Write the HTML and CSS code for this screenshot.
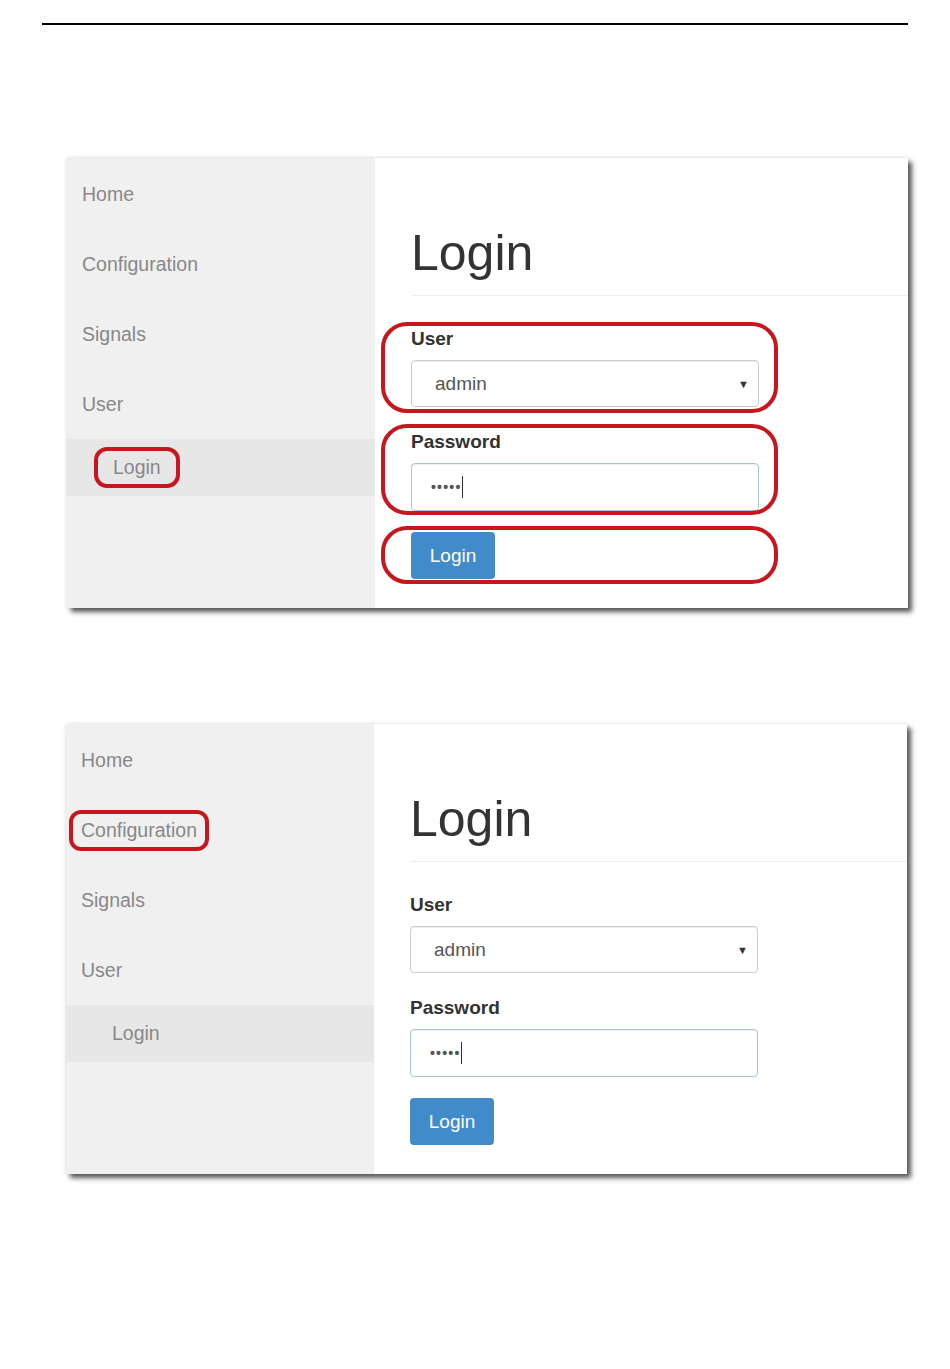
FILE: index.html
```html
<!DOCTYPE html>
<html lang="en">
<head>
    <meta charset="UTF-8">
    <title>Login</title>
    <link rel="stylesheet" href="styles.css">
</head>
<body>
<div class="page">
    <div class="rule"></div>

    <!-- screenshot 1: form fields marked -->
    <div class="panel panel-one">
        <ul class="nav">
            <li>Home</li>
            <li>Configuration</li>
            <li>Signals</li>
            <li>User</li>
            <li class="sub active"><span class="mark mark-login">Login</span></li>
        </ul>
        <div class="main">
            <h1>Login</h1>
            <div class="field">
                <label>User</label>
                <div class="select"><span>admin</span><span class="caret">&#9660;</span></div>
            </div>
            <div class="field field-pass">
                <label>Password</label>
                <div class="input"><span class="dots">&#8226;&#8226;&#8226;&#8226;&#8226;</span><span class="cursor"></span></div>
            </div>
            <button class="btn">Login</button>
        </div>
        <div class="ring ring-user"></div>
        <div class="ring ring-pass"></div>
        <div class="ring ring-btn"></div>
    </div>

    <!-- screenshot 2: configuration marked -->
    <div class="panel panel-two">
        <ul class="nav">
            <li>Home</li>
            <li><span class="mark mark-config">Configuration</span></li>
            <li>Signals</li>
            <li>User</li>
            <li class="sub active">Login</li>
        </ul>
        <div class="main">
            <h1>Login</h1>
            <div class="field">
                <label>User</label>
                <div class="select"><span>admin</span><span class="caret">&#9660;</span></div>
            </div>
            <div class="field field-pass">
                <label>Password</label>
                <div class="input"><span class="dots">&#8226;&#8226;&#8226;&#8226;&#8226;</span><span class="cursor"></span></div>
            </div>
            <button class="btn">Login</button>
        </div>
    </div>
</div>
</body>
</html>
```

FILE: styles.css
```css
* {
    margin: 0;
    padding: 0;
    box-sizing: border-box;
}

body {
    background: #fff;
    font-family: "Liberation Sans", Arial, sans-serif;
    color: #333;
}

ul {
    list-style: none;
}

.page {
    padding-top: 23px;
    padding-bottom: 190px;
}

.rule {
    margin-left: 42px;
    width: 866px;
    border-top: 2px solid #000;
}

.panel {
    position: relative;
    display: flex;
    width: 841px;
    height: 450px;
    margin-left: 67px;
    background: #fff;
    box-shadow: 4px 4px 5px rgba(0, 0, 0, 0.65), 0 0 4px rgba(0, 0, 0, 0.12);
}

.panel-one {
    margin-top: 133px;
}

.panel-two {
    margin-top: 116px;
    margin-left: 66px;
}

.nav {
    width: 308px;
    background: #f0f0f0;
    padding-top: 1px;
}

.nav li {
    height: 70px;
    display: flex;
    align-items: center;
    padding-left: 15px;
    font-size: 19.5px;
    color: #888;
}

.nav li.sub {
    padding-left: 46px;
    height: 57px;
}

.nav li.active {
    background: #e7e7e7;
}

.mark {
    border: 4px solid #c8161e;
    border-radius: 12px;
    line-height: 19px;
    padding: 7px 8px;
    margin-left: -12px;
}

.mark-login {
    padding: 7px 15px;
    margin-left: -19px;
    border-radius: 13px;
}

.main {
    flex: 1;
    padding-top: 68px;
    padding-left: 36px;
}

.main h1 {
    font-size: 50px;
    font-weight: normal;
    line-height: 55px;
    color: #333;
    padding-bottom: 14px;
    border-bottom: 1px solid #eee;
    margin-bottom: 32px;
}

.field {
    margin-bottom: 24px;
}

.field-pass {
    margin-bottom: 21px;
}

.field label {
    display: block;
    font-size: 19px;
    font-weight: bold;
    line-height: 22px;
    color: #333;
    margin-bottom: 10px;
}

.select,
.input {
    width: 348px;
    height: 47px;
    border: 1px solid #ccc;
    border-radius: 4px;
    display: flex;
    align-items: center;
    font-size: 19px;
    color: #555;
    box-shadow: inset 0 1px 1px rgba(0, 0, 0, 0.075);
}

.select {
    justify-content: space-between;
    padding: 0 9px 0 23px;
}

.caret {
    font-size: 11px;
    color: #333;
}

.input {
    height: 48px;
    padding-left: 19px;
    border-color: #a9c5da;
}

.dots {
    font-size: 14px;
    font-weight: bold;
    letter-spacing: 1.2px;
    color: #555;
}

.cursor {
    width: 1px;
    height: 22px;
    background: #333;
}

.btn {
    width: 84px;
    height: 47px;
    border: none;
    border-radius: 4px;
    background: #428bca;
    color: #fff;
    font-family: "Liberation Sans", Arial, sans-serif;
    font-size: 19px;
    text-align: center;
}

.ring {
    position: absolute;
    left: 314px;
    width: 397px;
    border: 4px solid #c8161e;
    border-radius: 26px;
}

.ring-user {
    top: 164px;
    height: 91px;
}

.ring-pass {
    top: 266px;
    height: 91px;
}

.ring-btn {
    top: 368px;
    height: 58px;
}
```
